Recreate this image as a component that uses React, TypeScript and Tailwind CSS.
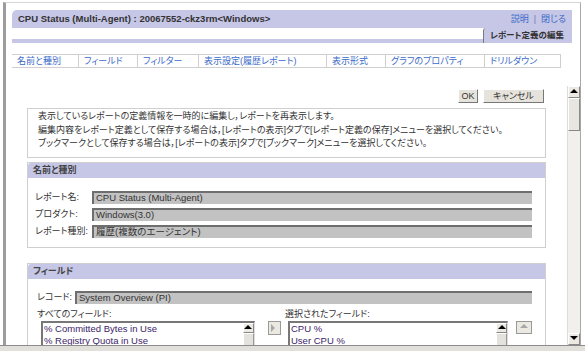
const lav = 'bg-[#c6c6e6]';

function Tri({ dir, color = '#000' }: { dir: 'up' | 'down' | 'right'; color?: string }) {
  const pts = dir === 'up' ? '0,5 4,1 8,5' : dir === 'down' ? '0,1 4,5 8,1' : '1,0 5,4 1,8';
  return (
    <svg width="8" height="8" viewBox="0 0 8 8" className="block">
      <polygon points={pts} fill={color} />
    </svg>
  );
}

function ScrollBtn({ dir }: { dir: 'up' | 'down' }) {
  return (
    <div className="h-[12px] bg-[#ece9e2] border border-t-white border-l-white border-r-[#888] border-b-[#888] flex items-center justify-center">
      <Tri dir={dir} />
    </div>
  );
}

function Field({ label, value, labelW }: { label: string; value: string; labelW: string }) {
  return (
    <div className="flex items-center h-[13px]">
      <span className={`${labelW} text-[9px] leading-none shrink-0 whitespace-nowrap`}>{label}</span>
      <div className="flex-1 h-[13px] bg-[#c2c2c2] border-t-2 border-l-2 border-[#6e6e6e] flex items-center pl-[2px] text-[9.5px] leading-none whitespace-nowrap">
        {value}
      </div>
    </div>
  );
}

function Section({ title, children }: { title: string; children: React.ReactNode }) {
  return (
    <div className="mx-[21px] border border-[#cfcfcf] bg-white">
      <div className={`h-[15px] ${lav} rounded-tl-[3px] flex items-center pl-[5px] text-[9px] leading-none font-bold text-[#444]`}>{title}</div>
      {children}
    </div>
  );
}

function ListBox({ items }: { items: string[] }) {
  return (
    <div className="h-[60px] flex border-t-2 border-l-2 border-[#777] border-r border-b border-r-[#ddd] border-b-[#ddd] bg-white">
      <div className="flex-1 pl-[1px] text-[9.5px] leading-[12px] text-[#3a2468] overflow-hidden">
        {items.map(i => <div key={i} className="whitespace-nowrap">{i}</div>)}
      </div>
      <div className="w-[11px] bg-[#f1f0ec] flex flex-col">
        <div className="h-[10px] bg-[#ece9e2] border border-t-white border-l-white border-r-[#888] border-b-[#888] flex items-center justify-center"><Tri dir="up" /></div>
        <div className="h-[14px] bg-[#e4e2dc] border border-t-white border-l-white border-r-[#999] border-b-[#999]" />
      </div>
    </div>
  );
}

const tabs: [string, string][] = [
  ['名前と種別', 'w-[67px]'],
  ['フィールド', 'w-[59px]'],
  ['フィルター', 'w-[61px]'],
  ['表示設定(履歴レポート)', 'w-[128px]'],
  ['表示形式', 'w-[59px]'],
  ['グラフのプロパティ', 'w-[99px]'],
  ['ドリルダウン', 'w-[76px]'],
];

export default function App() {
  return (
    <div className="w-[585px] h-[351px] overflow-hidden bg-white flex flex-col font-['Liberation_Sans','Noto_Sans_CJK_JP',sans-serif] [font-feature-settings:'palt'] text-[#333]">
      <div className="flex-1 min-h-0 flex flex-col ml-[3px] mr-[4px] mt-[2px] border-l-[3px] border-l-[#9c9c9c] border-t border-t-[#d6d6d6] border-r border-r-[#a8a8a8]">
        {/* Title bar */}
        <div className={`mt-[7px] ml-[6px] mr-[8px] h-[18px] ${lav} rounded-tl-[5px] flex items-center justify-between pl-[6px] pr-[6px]`}>
          <span className="font-bold text-[9.5px] leading-none text-[#333]">CPU Status (Multi-Agent) : 20067552-ckz3rm&lt;Windows&gt;</span>
          <span className="text-[9px] leading-none text-[#3b6bc8]">説明<span className="text-[#7a7aa8] mx-[5px]">|</span>閉じる</span>
        </div>

        {/* Tab strip */}
        <div className="ml-[6px] mr-[8px] h-[15px] flex items-end">
          <div className={`flex-1 h-[4px] ${lav}`} />
          <div className={`w-[89px] h-full ${lav} border-l border-[#7a7a7a] rounded-tl-[3px] flex items-center pl-[6px] text-[8.5px] leading-none font-bold text-[#333]`}>
            レポート定義の編集
          </div>
        </div>

        {/* Sub tabs */}
        <div className="mt-[11px] ml-[6px] flex border-y border-[#cfcfcf] h-[14px] self-start">
          {tabs.map(([t, w]) => (
            <div key={t} className={`${w} border-r border-[#cfcfcf] flex items-center pl-[5px] text-[9px] leading-none text-[#3b6bc8] whitespace-nowrap`}>
              {t}
            </div>
          ))}
        </div>

        {/* Content + scrollbar */}
        <div className="flex-1 min-h-0 flex">
          <div className="flex-1 min-w-0 overflow-hidden flex flex-col">
            <div className="mt-[21px] mr-[23px] flex justify-end gap-[5px]">
              <button className="w-[20px] h-[14px] bg-[#e6e3dc] border border-t-white border-l-white border-r-[#777] border-b-[#777] text-[9px] leading-none">OK</button>
              <button className="w-[61px] h-[14px] bg-[#e6e3dc] border border-t-white border-l-white border-r-[#777] border-b-[#777] text-[9px] leading-none">キャンセル</button>
            </div>

            <div className="mt-[5px] mx-[21px] border border-[#cfcfcf] px-[10px] pt-[1px] pb-[6px] text-[9px] leading-[13.5px] whitespace-nowrap">
              <p>表示しているレポートの定義情報を一時的に編集し，レポートを再表示します。</p>
              <p>編集内容をレポート定義として保存する場合は，[レポートの表示]タブで[レポート定義の保存]メニューを選択してください。</p>
              <p>ブックマークとして保存する場合は，[レポートの表示]タブで[ブックマーク]メニューを選択してください。</p>
            </div>

            <div className="mt-[4px]">
              <Section title="名前と種別">
                <div className="pt-[13px] pb-[9px] pl-[7px] pr-[13px] flex flex-col gap-[4px]">
                  <Field label="レポート名:" value="CPU Status (Multi-Agent)" labelW="w-[57px]" />
                  <Field label="プロダクト:" value="Windows(3.0)" labelW="w-[57px]" />
                  <Field label="レポート種別:" value="履歴(複数のエージェント)" labelW="w-[57px]" />
                </div>
              </Section>
            </div>

            <div className="mt-[15px]">
              <Section title="フィールド">
                <div className="pt-[12px] pl-[9px] pr-[13px]">
                  <Field label="レコード:" value="System Overview (PI)" labelW="w-[38px]" />
                  <div className="mt-[3px] flex">
                    <div className="w-[228px] flex flex-col">
                      <span className="text-[9px] leading-[14px] whitespace-nowrap">すべてのフィールド:</span>
                      <div className="ml-[4px]">
                        <ListBox items={['% Committed Bytes in Use', '% Registry Quota in Use', '% Total DPC Time', '% Total Interrupt Time']} />
                      </div>
                    </div>
                    <div className="ml-[13px] mt-[14px] w-[14px] h-[14px] bg-[#ece9e2] border border-[#999] flex items-center justify-center">
                      <Tri dir="right" color="#a8a8a8" />
                    </div>
                    <div className="ml-[7px] flex flex-col">
                      <span className="text-[9px] leading-[14px] -ml-[3px] whitespace-nowrap">選択されたフィールド:</span>
                      <div className="flex items-start gap-[8px]">
                        <div className="w-[220px]">
                          <ListBox items={['CPU %', 'User CPU %', 'Privileged CPU %', 'Processor Queue Length']} />
                        </div>
                        <div className="w-[16px] h-[13px] bg-[#ece9e2] border border-[#999] flex items-center justify-center">
                          <Tri dir="up" color="#a8a8a8" />
                        </div>
                      </div>
                    </div>
                  </div>
                </div>
              </Section>
            </div>
          </div>

          {/* Page scrollbar */}
          <div className="w-[13px] mt-[18px] flex flex-col bg-[#f1f0ec] border-l border-[#ddd]">
            <ScrollBtn dir="up" />
            <div className="h-[33px] bg-[#e8e6e0] border border-t-white border-l-white border-r-[#888] border-b-[#888]" />
            <div className="flex-1" />
            <ScrollBtn dir="down" />
          </div>
        </div>
      </div>
      <div className="h-[6px] bg-[#e2e0da] border-t border-[#8c8c8c]" />
    </div>
  );
}
